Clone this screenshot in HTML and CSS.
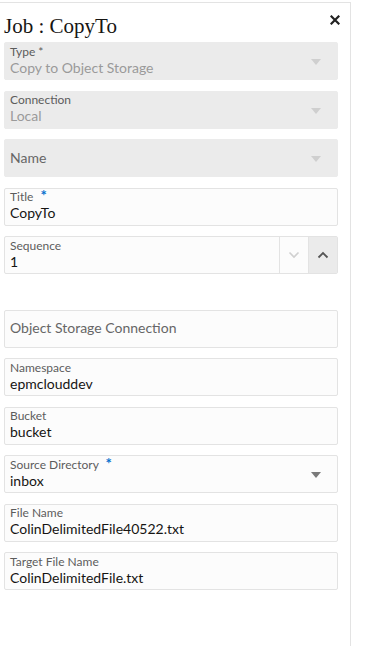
FILE: index.html
```html
<!DOCTYPE html>
<html lang="en">
<head>
  <meta charset="UTF-8">
  <meta name="viewport" content="width=device-width, initial-scale=1.0">
  <title>Job : CopyTo</title>
  <link rel="stylesheet" href="styles.css">
</head>
<body>
  <div class="panel">
    <div class="panel-header">
      <h1 class="job-title">Job : CopyTo</h1>
      <button class="close-btn" type="button" aria-label="Close">
        <svg width="10" height="10" viewBox="0 0 10 10"><path d="M1.5 1.5 L8.5 8.5 M8.5 1.5 L1.5 8.5" stroke="#222" stroke-width="2.2" stroke-linecap="square"/></svg>
      </button>
    </div>

    <div class="form">
      <div class="field field-disabled">
        <div class="field-body">
          <span class="field-label">Type *</span>
          <span class="field-value">Copy to Object Storage</span>
        </div>
        <span class="caret caret-light"></span>
      </div>

      <div class="field field-disabled">
        <div class="field-body">
          <span class="field-label">Connection</span>
          <span class="field-value">Local</span>
        </div>
        <span class="caret caret-light"></span>
      </div>

      <div class="field field-disabled">
        <div class="field-body">
          <span class="field-placeholder">Name</span>
        </div>
        <span class="caret caret-light"></span>
      </div>

      <div class="field">
        <div class="field-body">
          <span class="field-label">Title <span class="required">*</span></span>
          <span class="field-value">CopyTo</span>
        </div>
      </div>

      <div class="field field-number">
        <div class="field-body">
          <span class="field-label">Sequence</span>
          <span class="field-value">1</span>
        </div>
        <button class="step-btn" type="button" aria-label="Decrease">
          <svg width="12" height="8" viewBox="0 0 12 8"><path d="M1.5 1.5 L6 6 L10.5 1.5" fill="none" stroke="#d0d0d0" stroke-width="1.6"/></svg>
        </button>
        <button class="step-btn step-btn-active" type="button" aria-label="Increase">
          <svg width="12" height="8" viewBox="0 0 12 8"><path d="M1.5 6.5 L6 2 L10.5 6.5" fill="none" stroke="#555" stroke-width="1.8"/></svg>
        </button>
      </div>

      <div class="spacer"></div>

      <div class="field">
        <div class="field-body">
          <span class="field-placeholder">Object Storage Connection</span>
        </div>
      </div>

      <div class="field">
        <div class="field-body">
          <span class="field-label">Namespace</span>
          <span class="field-value">epmclouddev</span>
        </div>
      </div>

      <div class="field">
        <div class="field-body">
          <span class="field-label">Bucket</span>
          <span class="field-value">bucket</span>
        </div>
      </div>

      <div class="field">
        <div class="field-body">
          <span class="field-label">Source Directory <span class="required">*</span></span>
          <span class="field-value">inbox</span>
        </div>
        <span class="caret"></span>
      </div>

      <div class="field">
        <div class="field-body">
          <span class="field-label">File Name</span>
          <span class="field-value">ColinDelimitedFile40522.txt</span>
        </div>
      </div>

      <div class="field">
        <div class="field-body">
          <span class="field-label">Target File Name</span>
          <span class="field-value">ColinDelimitedFile.txt</span>
        </div>
      </div>
    </div>
  </div>
</body>
</html>
```

FILE: styles.css
```css
* {
  margin: 0;
  padding: 0;
  box-sizing: border-box;
}

body {
  font-family: 'Lato', 'Open Sans', sans-serif;
  background: #ffffff;
  height: 646px;
  overflow: hidden;
}

.panel {
  width: 351px;
  height: 644px;
  margin-top: 2px;
  border-top: 1px solid #e3e3e3;
  border-right: 1px solid #e3e3e3;
  padding: 0 12px 0 4px;
}

.panel-header {
  display: flex;
  justify-content: space-between;
  align-items: flex-start;
  height: 39px;
}

.job-title {
  font-family: 'Liberation Serif', serif;
  font-weight: 400;
  font-size: 21px;
  color: #161513;
  line-height: 24px;
  margin-top: 11px;
}

.close-btn {
  border: none;
  background: none;
  margin-top: 11px;
  margin-right: -3px;
  width: 12px;
  height: 12px;
  display: flex;
  align-items: center;
  justify-content: center;
}

.form {
  display: flex;
  flex-direction: column;
  gap: 10.5px;
}

.field {
  display: flex;
  align-items: stretch;
  height: 38px;
  background: #fcfcfc;
  border: 1px solid #e3e3e3;
  border-radius: 2px;
}

.field-disabled {
  background: #ebebeb;
  border-color: #ebebeb;
}

.field-body {
  flex: 1;
  display: flex;
  flex-direction: column;
  justify-content: center;
  padding: 0 5px 1px 5px;
}

.field-label {
  font-size: 12px;
  line-height: 14px;
  color: #5c5c5c;
}

.field-value {
  font-size: 14px;
  line-height: 18px;
  color: #161513;
}

.field-disabled .field-value {
  color: #9a9a9a;
}

.field-placeholder {
  font-size: 14px;
  line-height: 18px;
  color: #666666;
}

.required {
  display: inline-block;
  color: #0572ce;
  font-size: 15px;
  font-weight: 700;
  line-height: 10px;
  vertical-align: top;
  margin-left: 4px;
}

.caret {
  align-self: center;
  width: 0;
  height: 0;
  margin-right: 16px;
  margin-top: 2px;
  border-left: 5px solid transparent;
  border-right: 5px solid transparent;
  border-top: 6px solid #7a7a7a;
}

.caret-light {
  border-top-color: #cfcfcf;
}

.step-btn {
  width: 29px;
  border: none;
  border-left: 1px solid #e3e3e3;
  background: #fcfcfc;
  display: flex;
  align-items: center;
  justify-content: center;
}

.step-btn-active {
  background: #ebebeb;
}

.spacer {
  height: 14.5px;
}
```
